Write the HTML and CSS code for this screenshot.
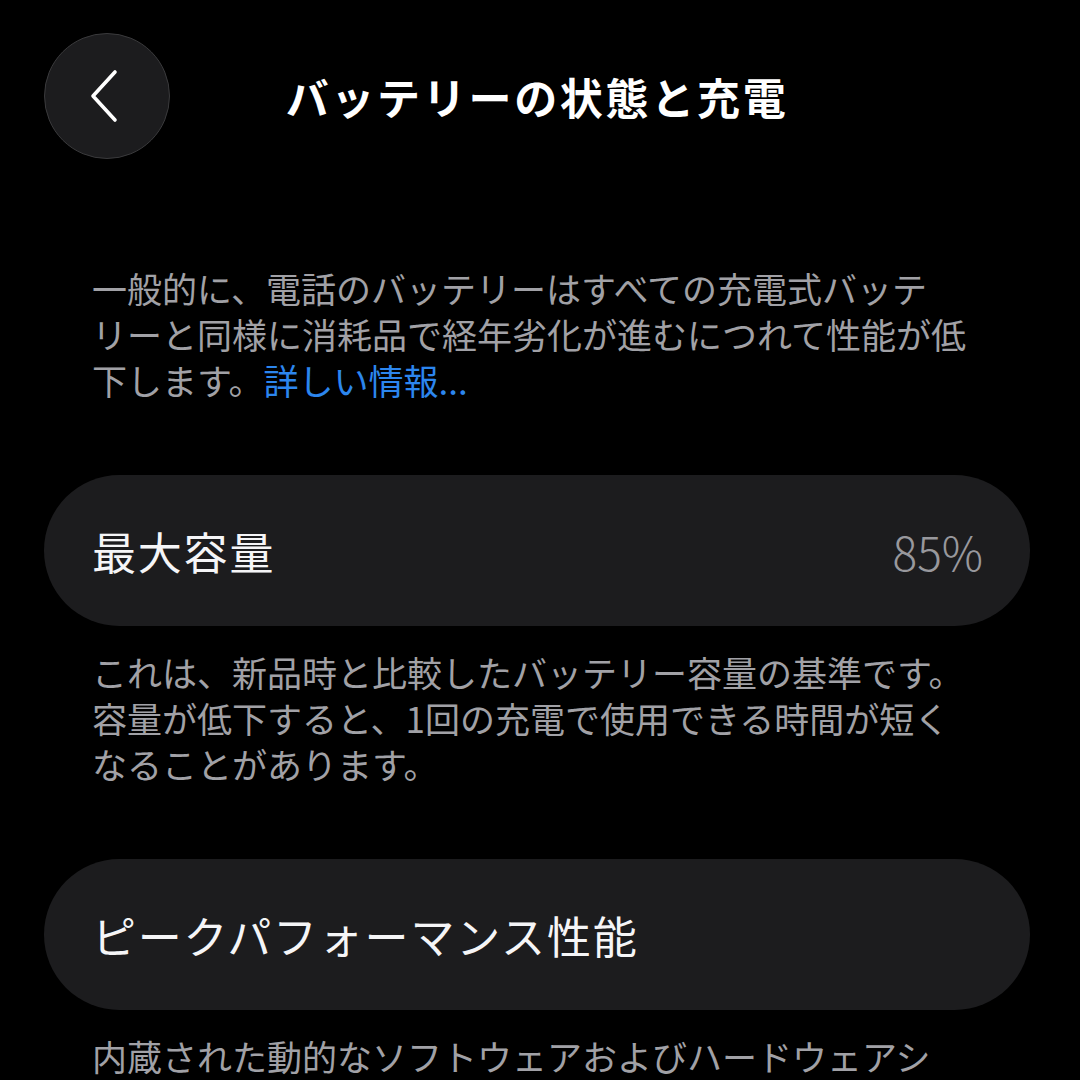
FILE: index.html
```html
<!DOCTYPE html>
<html lang="ja">

<head>
    <meta charset="utf-8">
    <title>バッテリーの状態と充電</title>
    <link rel="stylesheet" href="styles.css">
</head>

<body>
    <div class="page">
        <div class="header">
            <button class="back-button" aria-label="戻る">
                <svg width="34" height="56" viewBox="0 0 34 56">
                    <path d="M28 4 L6 28 L28 52" fill="none" stroke="#fff" stroke-width="3.6"
                        stroke-linecap="round" stroke-linejoin="round" />
                </svg>
            </button>
            <h1>バッテリーの状態と充電</h1>
            <div></div>
        </div>

        <p class="intro">
            一般的に、電話のバッテリーはすべての充電式バッテ<br>
            リーと同様に消耗品で経年劣化が進むにつれて性能が低<br>
            下します。<a href="#" class="link">詳しい情報...</a>
        </p>

        <div class="group">
            <div class="card">
                <span class="card-label">最大容量</span>
                <span class="card-value">85%</span>
            </div>
            <p class="note">
                これは、新品時と比較したバッテリー容量の基準です。<br>
                容量が低下すると、1回の充電で使用できる時間が短く<br>
                なることがあります。
            </p>
        </div>

        <div class="group">
            <div class="card">
                <span class="card-label">ピークパフォーマンス性能</span>
            </div>
            <p class="note">
                内蔵された動的なソフトウェアおよびハードウェアシ
            </p>
        </div>
    </div>
</body>

</html>
```

FILE: styles.css
```css
html,
body {
    margin: 0;
    padding: 0;
    background-color: #000;
}

body {
    font-family: "Noto Sans CJK JP", "Noto Sans", sans-serif;
    color: #fff;
    height: 1080px;
    overflow: hidden;
}

.page {
    padding: 33px 50px 0 44px;
}

.header {
    display: grid;
    grid-template-columns: 126px 1fr 126px;
    align-items: center;
    height: 126px;
}

.back-button {
    width: 126px;
    height: 126px;
    border-radius: 50%;
    background-color: #1c1c1e;
    border: 1.5px solid #3a3a3c;
    display: flex;
    align-items: center;
    justify-content: center;
    padding: 0 6px 0 0;
    cursor: pointer;
}

.header h1 {
    margin: 0;
    text-align: center;
    font-size: 43px;
    font-weight: 700;
    letter-spacing: 2.7px;
    line-height: 1;
}

.intro,
.note {
    font-size: 35px;
    line-height: 46px;
    color: #a1a1a6;
    margin: 0;
    padding-left: 48px;
    white-space: nowrap;
}

.intro {
    margin-top: 106px;
}

.link {
    color: #2c86ee;
    text-decoration: none;
}

.group {
    margin-top: 72px;
}

.card {
    height: 151px;
    border-radius: 76px;
    background-color: #1c1c1e;
    display: flex;
    align-items: center;
    justify-content: space-between;
    padding: 0 47px 0 48px;
}

.card-label {
    font-size: 44px;
    letter-spacing: 1.8px;
    color: #f5f5f7;
}

.card-value {
    font-size: 46px;
    font-weight: 300;
    color: #98989d;
}

.note {
    margin-top: 23px;
}
```
